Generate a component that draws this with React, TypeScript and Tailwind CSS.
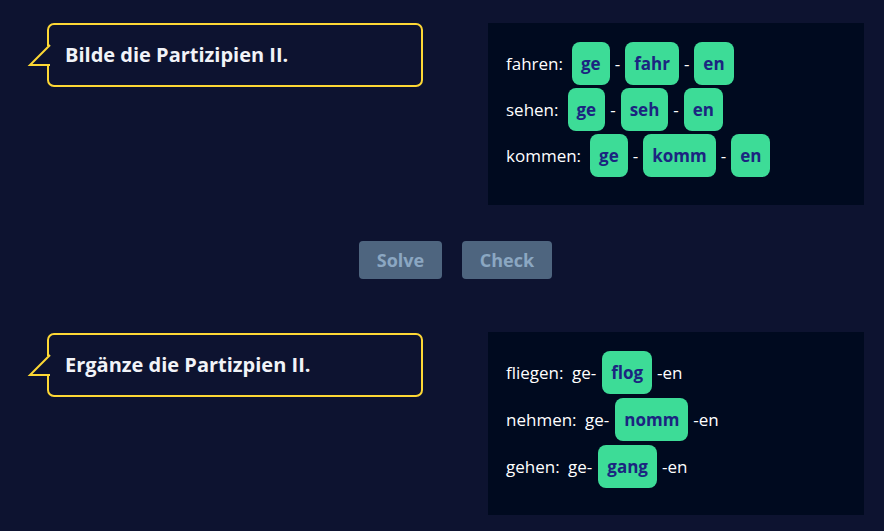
import React from "react";

const BG = "#0d1330";

function Bubble({ text }: { text: string }) {
  return (
    <div className="relative ml-[47px] w-[376px] h-[64px] shrink-0 rounded-[7px] border-2 border-[#fdd835] bg-[#0d1330] flex items-center pl-[16px]">
      <svg
        className="absolute left-[-22px] top-[18px] overflow-visible"
        width="26"
        height="26"
        viewBox="0 0 26 26"
      >
        <rect x="20" y="3" width="6" height="18" fill={BG} />
        <polyline
          points="23,2 3,22 23,22"
          fill={BG}
          stroke="#fdd835"
          strokeWidth="2"
          strokeLinejoin="miter"
        />
      </svg>
      <span className="text-[20px] font-bold text-[#f1f3f8] leading-none">{text}</span>
    </div>
  );
}

function Chip({ t }: { t: string }) {
  return (
    <span className="h-[43px] px-[9px] rounded-[8px] bg-[#3ddc97] text-[#1b2580] font-bold text-[17px] flex items-center leading-none">
      {t}
    </span>
  );
}

function Dash() {
  return <span className="mx-[5px] text-white text-[17px]">-</span>;
}

function Row1({ label, parts }: { label: string; parts: string[] }) {
  return (
    <div className="flex items-center">
      <span className="text-white text-[17px] mr-[9px]">{label}</span>
      <Chip t={parts[0]} />
      <Dash />
      <Chip t={parts[1]} />
      <Dash />
      <Chip t={parts[2]} />
    </div>
  );
}

function Row2({ label, stem }: { label: string; stem: string }) {
  return (
    <div className="flex items-center text-white text-[17px]">
      <span className="[word-spacing:4px]">{label}</span>
      <span className="ml-[6px] mr-[5px]">
        <Chip t={stem} />
      </span>
      <span>-en</span>
    </div>
  );
}

export default function App() {
  return (
    <div
      className="w-[884px] h-[531px] bg-[#0d1330] overflow-hidden"
      style={{ fontFamily: "'Open Sans', sans-serif" }}
    >
      <div className="w-[864px] pt-[23px] flex flex-col">
        <div className="flex items-start">
          <Bubble text="Bilde die Partizipien II." />
          <div className="ml-[65px] w-[376px] h-[182px] bg-[#000a1f] pl-[18px] pt-[19px] flex flex-col gap-[3px]">
            <Row1 label="fahren:" parts={["ge", "fahr", "en"]} />
            <Row1 label="sehen:" parts={["ge", "seh", "en"]} />
            <Row1 label="kommen:" parts={["ge", "komm", "en"]} />
          </div>
        </div>

        <div className="ml-[47px] mt-[36px] flex justify-center gap-[20px]">
          <button className="w-[83px] h-[38px] rounded-[4px] bg-[#4e657f] text-[#8ba7c2] font-bold text-[18px]">
            Solve
          </button>
          <button className="w-[90px] h-[38px] rounded-[4px] bg-[#4e657f] text-[#8ba7c2] font-bold text-[18px]">
            Check
          </button>
        </div>

        <div className="flex items-start mt-[53px]">
          <div className="mt-[1px]">
            <Bubble text="Ergänze die Partizpien II." />
          </div>
          <div className="ml-[65px] w-[376px] h-[183px] bg-[#000a1f] pl-[18px] pt-[19px] flex flex-col gap-[4px]">
            <Row2 label="fliegen: ge-" stem="flog" />
            <Row2 label="nehmen: ge-" stem="nomm" />
            <Row2 label="gehen: ge-" stem="gang" />
          </div>
        </div>
      </div>
    </div>
  );
}
